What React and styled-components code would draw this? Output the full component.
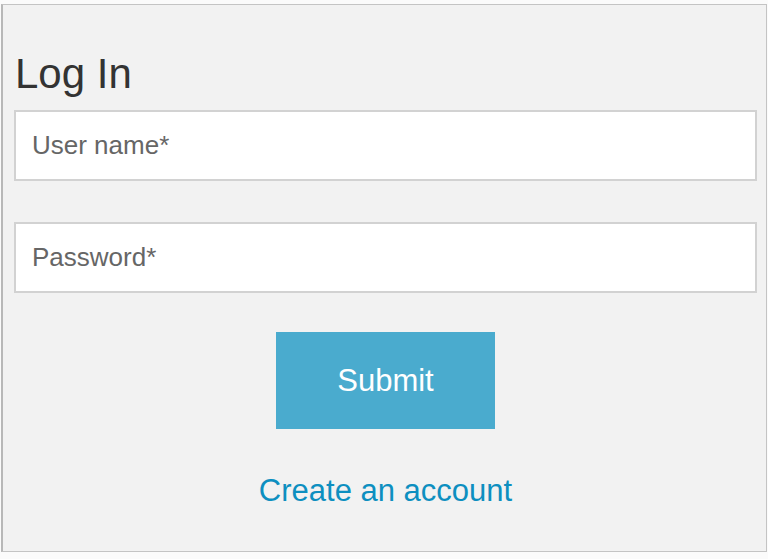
import React, { useState } from 'react'
import styled, { createGlobalStyle } from 'styled-components'

const GlobalStyle = createGlobalStyle`
  html, body {
    margin: 0;
    padding: 0;
    background: #fbfbfb;
    font-family: "Liberation Sans", Arial, sans-serif;
  }
`

const Page = styled.div`
  padding: 4px 1px 0 1px;
  height: 559px;
  box-sizing: border-box;
`

const Panel = styled.form`
  height: 548px;
  box-sizing: border-box;
  background: #f2f2f2;
  border: 1px solid #c4c4c4;
  border-left: 2px solid #b8b8b8;
  padding: 44px 9px 0 11px;
  display: flex;
  flex-direction: column;
`

const Title = styled.h1`
  margin: 0 0 11px 1px;
  font-size: 42px;
  font-weight: 400;
  line-height: 50px;
  color: #333;
`

const Field = styled.input`
  box-sizing: border-box;
  width: 743px;
  height: 71px;
  margin-bottom: ${({ gap }) => gap}px;
  padding: 0 16px;
  border: 2px solid #d2d2d2;
  background: #fff;
  font-family: inherit;
  font-size: 26px;
  color: #333;
  outline: none;
  &::placeholder {
    color: #666;
  }
`

const Actions = styled.div`
  display: flex;
  flex-direction: column;
  align-items: center;
  width: 743px;
`

const SubmitButton = styled.button`
  width: 219px;
  height: 97px;
  border: none;
  background: #4aabce;
  color: #fff;
  font-family: inherit;
  font-size: 31px;
  cursor: pointer;
`

const CreateLink = styled.a`
  margin-top: 44px;
  font-size: 31px;
  line-height: 36px;
  color: #0d8fc0;
  text-decoration: none;
`

export default function App() {
  const [user, setUser] = useState('')
  const [pass, setPass] = useState('')
  return (
    <>
      <GlobalStyle />
      <Page>
        <Panel onSubmit={(e) => e.preventDefault()}>
          <Title>Log In</Title>
          <Field gap={41} placeholder="User name*" value={user} onChange={(e) => setUser(e.target.value)} />
          <Field gap={39} type="password" placeholder="Password*" value={pass} onChange={(e) => setPass(e.target.value)} />
          <Actions>
            <SubmitButton type="submit">Submit</SubmitButton>
            <CreateLink href="#">Create an account</CreateLink>
          </Actions>
        </Panel>
      </Page>
    </>
  )
}
